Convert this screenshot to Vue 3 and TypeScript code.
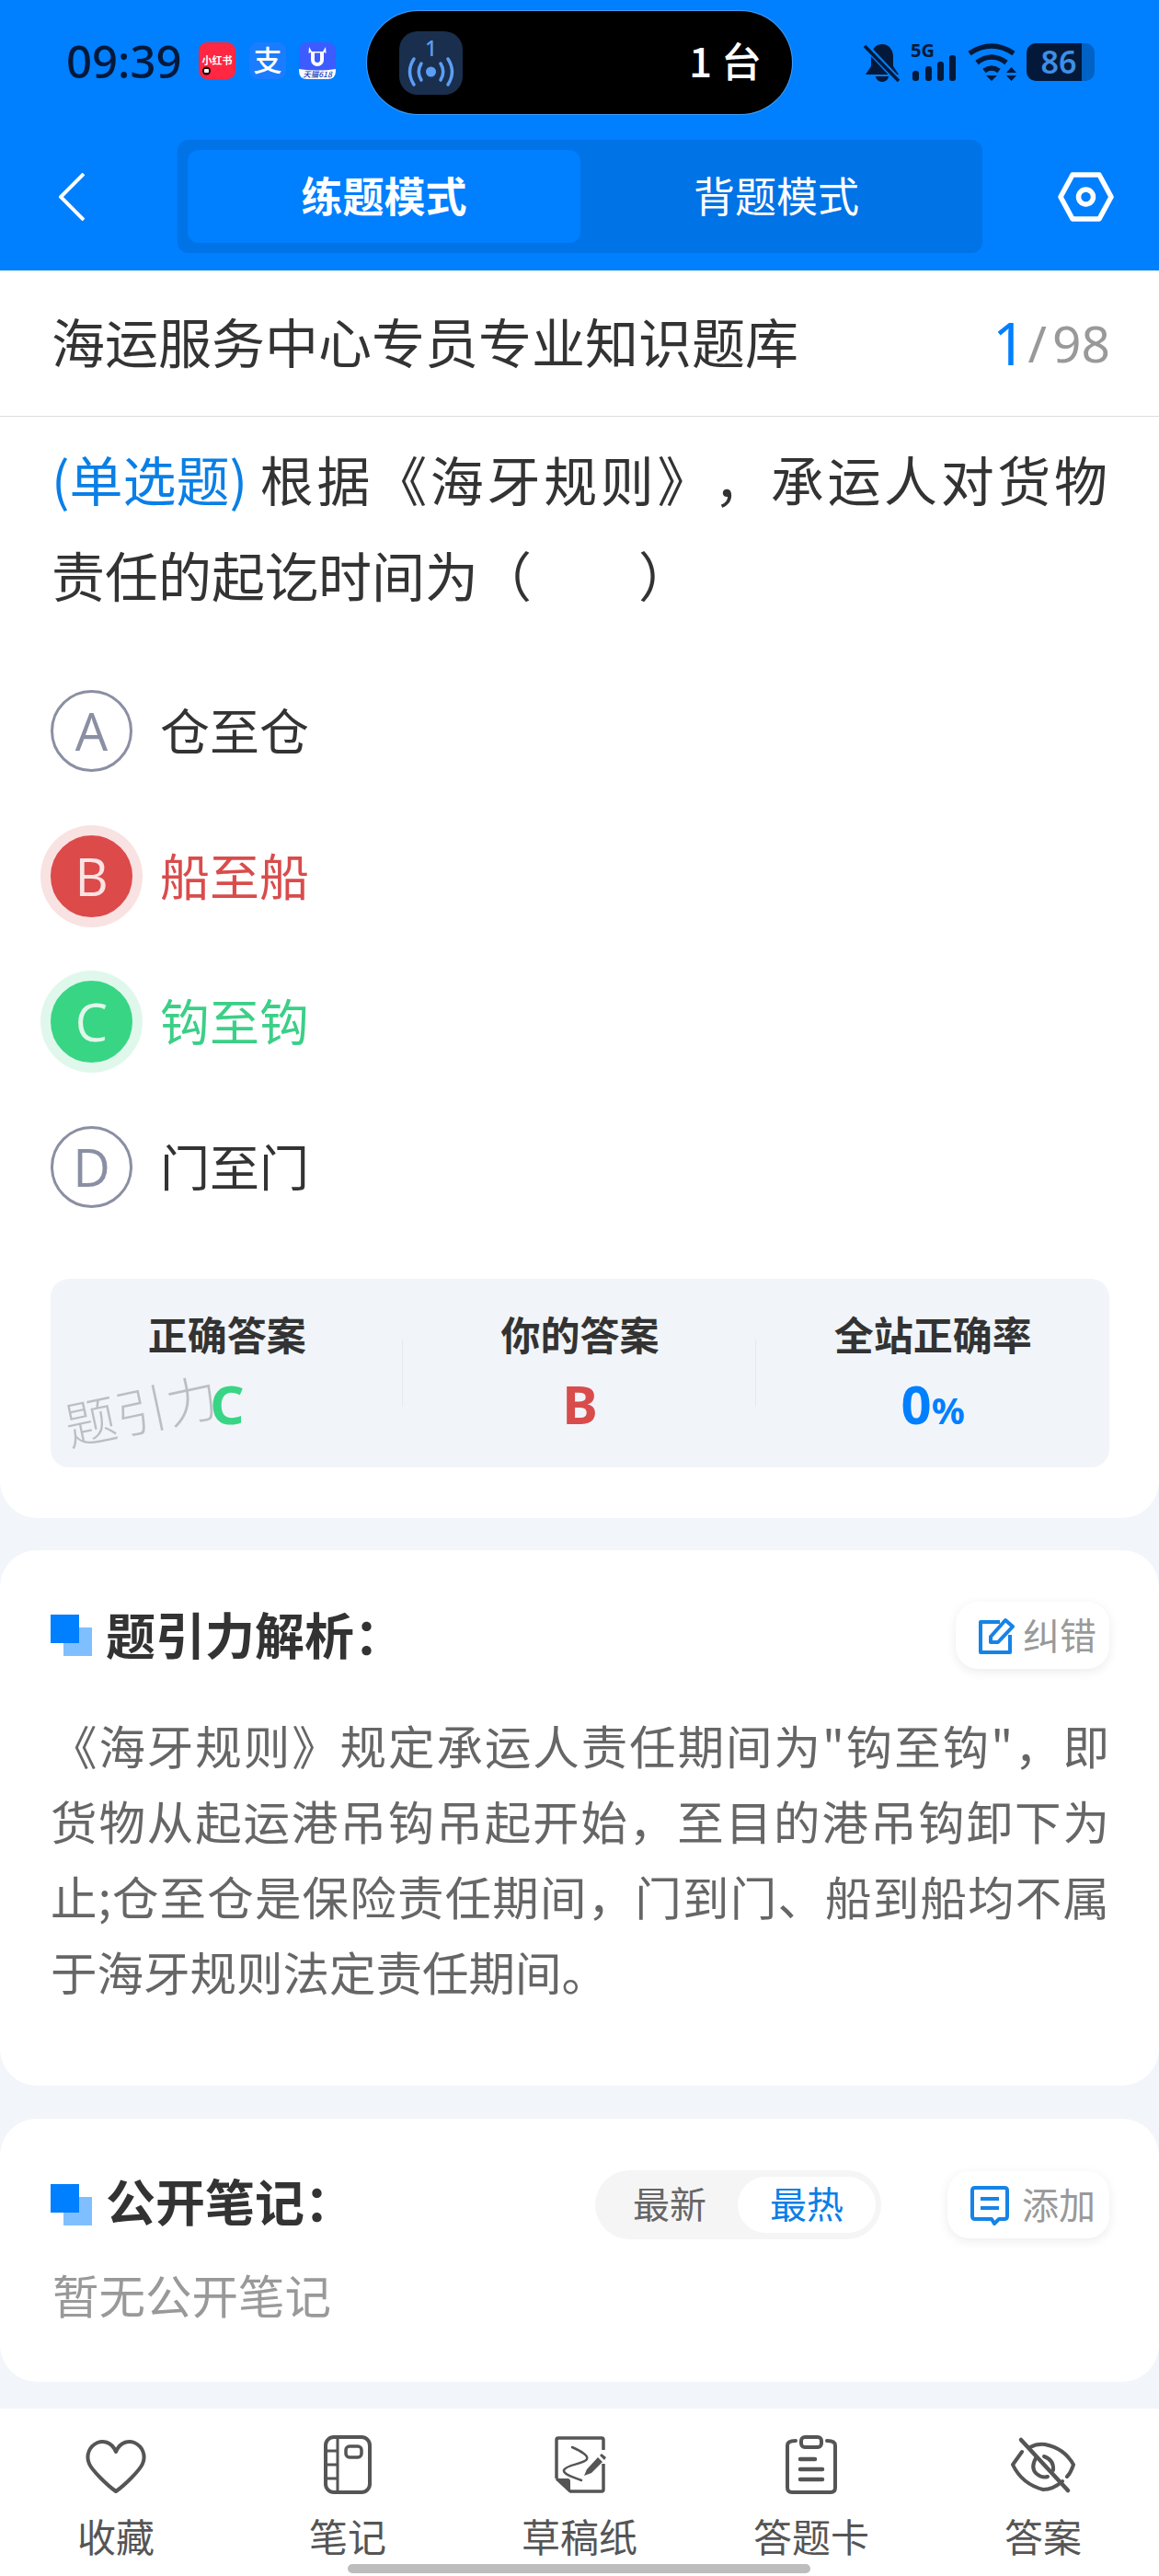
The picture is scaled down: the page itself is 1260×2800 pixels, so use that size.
<template>
  <div class="page">
    <!-- Top blue header -->
    <header class="header">
      <div class="status-bar">
        <div class="status-left">
          <span class="time">09:39</span>
          <svg class="app-icon" viewBox="0 0 40 40">
            <rect width="40" height="40" rx="9" fill="#ff2741" />
            <text x="20" y="24" text-anchor="middle" class="xhs-text">小红书</text>
            <circle cx="8.500" cy="31" r="4.500" fill="#1a0408" />
            <rect x="6" y="29" width="5" height="4" rx="1" fill="#fff" />
          </svg>
          <svg class="app-icon" viewBox="0 0 40 40">
            <rect width="40" height="40" rx="9" fill="#1a7dff" />
            <text x="20" y="31" text-anchor="middle" class="ali-text">支</text>
          </svg>
          <svg class="app-icon" viewBox="0 0 40 40">
            <rect width="40" height="40" rx="9" fill="#3d5cff" />
            <path d="M0 29 Q20 32 40 29 V31 Q40 40 31 40 H9 Q0 40 0 31 Z" fill="#fff" />
            <path d="M11 5 L14 10 H26 L29 5 L29.500 12 Q28 11 27 11 V19 A7 7 0 0 1 13 19 V11 Q12 11 10.500 12 Z M17 11.500 V19 A3 3 0 0 0 23 19 V11.500 Z" fill="#fff" fill-rule="evenodd" />
            <text x="20" y="37.500" text-anchor="middle" class="tmall-text">天猫618</text>
          </svg>
        </div>
        <div class="island">
          <svg class="island-icon" viewBox="0 0 69 69">
            <rect width="69" height="69" rx="20" fill="#1a2f4d" />
            <text x="34.500" y="27" text-anchor="middle" class="island-num">1</text>
            <circle cx="34.500" cy="44" r="5.500" fill="#5b9ef5" />
            <g fill="none" stroke="#5b9ef5" stroke-width="3.500" stroke-linecap="round">
              <path d="M24 35 Q18.500 44 24 53" />
              <path d="M45 35 Q50.500 44 45 53" />
              <path d="M16 30 Q7 44 16 58" />
              <path d="M53 30 Q62 44 53 58" />
            </g>
          </svg>
          <span class="island-text">1 台</span>
        </div>
        <div class="status-right">
          <svg class="bell" viewBox="0 0 40 42">
            <path d="M20 1 C28 1 32 8 32 15 V25 L38 34 H2 L8 25 V15 C8 8 12 1 20 1 Z" fill="#04193a" />
            <path d="M13 36 H27 A7 6 0 0 1 13 36 Z" fill="#04193a" />
            <path d="M2 3 L37 40" stroke="#007fff" stroke-width="7" />
            <path d="M1 3 L38 41" stroke="#04193a" stroke-width="3.500" />
          </svg>
          <svg class="signal" viewBox="0 0 50 42">
            <text x="0" y="15" class="fiveg">5G</text>
            <rect x="2" y="30" width="7" height="11" rx="3" fill="#04193a" />
            <rect x="16" y="25" width="7" height="16" rx="3" fill="#04193a" />
            <rect x="29" y="20" width="7" height="21" rx="3" fill="#04193a" />
            <rect x="42" y="13" width="7" height="28" rx="3" fill="#04193a" />
          </svg>
          <svg class="wifi" viewBox="0 0 54 42">
            <g fill="none" stroke="#04193a" stroke-width="5.500">
              <path d="M2 11 Q26 -5 50 11" />
              <path d="M10 21 Q26 9 42 21" />
              <path d="M18 30 Q26 24 34 30" />
            </g>
            <path d="M20 35 H32 L26 41 Z" fill="#04193a" />
            <path d="M42 32 L47.500 26 L53 32 Z M42 35 H53 L47.500 41 Z" fill="#04193a" />
          </svg>
          <div class="battery">
            <span class="battery-num">86</span>
            <span class="battery-rest"></span>
          </div>
        </div>
      </div>
      <div class="nav-bar">
        <svg class="back" viewBox="0 0 28 52">
          <path d="M27 1 L2 26 L27 51" fill="none" stroke="#fff" stroke-width="4" />
        </svg>
        <div class="mode-switch">
          <div class="mode mode-active">练题模式</div>
          <div class="mode">背题模式</div>
        </div>
        <svg class="hex" viewBox="0 0 61 54">
          <path d="M16 3 H45 L58 27 L45 51 H16 L3 27 Z" fill="none" stroke="#fff" stroke-width="5.500" stroke-linejoin="round" />
          <circle cx="30.500" cy="27" r="8" fill="none" stroke="#fff" stroke-width="5.500" />
        </svg>
      </div>
    </header>

    <!-- Question -->
    <section class="card question-card">
      <div class="title-row">
        <span class="bank-name">海运服务中心专员专业知识题库</span>
        <span class="progress"><b>1</b><i>/</i><span>98</span></span>
      </div>
      <div class="question">
        <div class="q-first"><span class="q-type">(单选题)</span><span>根据《海牙规则》，承运人对货物</span></div>
        <div>责任的起讫时间为（　　）</div>
      </div>
      <div class="options">
        <div v-for="opt in options" :key="opt.key" class="option" :class="opt.state">
          <span class="opt-circle">{{ opt.key }}</span>
          <span class="opt-text">{{ opt.text }}</span>
        </div>
      </div>
      <div class="answer-box">
        <div class="answer-col">
          <div class="answer-label">正确答案</div>
          <div class="answer-value green">C</div>
        </div>
        <div class="answer-col">
          <div class="answer-label">你的答案</div>
          <div class="answer-value red">B</div>
        </div>
        <div class="answer-col">
          <div class="answer-label">全站正确率</div>
          <div class="answer-value blue">0<small>%</small></div>
        </div>
        <span class="watermark">题引力</span>
      </div>
    </section>

    <!-- Analysis -->
    <section class="card analysis-card">
      <div class="block-head">
        <h3 class="block-title"><span class="squares"></span><span class="title-text">题引力解析：</span></h3>
        <div class="pill-btn">
          <svg viewBox="0 0 40 40" class="pill-icon">
            <path d="M24 5 H3 V38 H35 V19" fill="none" stroke="#1683e6" stroke-width="4" stroke-linejoin="round" />
            <path d="M14 21 L30 3 L38 10 L22 27 H14 Z" fill="none" stroke="#1683e6" stroke-width="4" stroke-linejoin="round" />
          </svg>
          <span class="pill-text">纠错</span>
        </div>
      </div>
      <p class="analysis-text">《海牙规则》规定承运人责任期间为"钩至钩"，即货物从起运港吊钩吊起开始，至目的港吊钩卸下为止;仓至仓是保险责任期间，门到门、船到船均不属于海牙规则法定责任期间。</p>
    </section>

    <!-- Notes -->
    <section class="card notes-card">
      <div class="block-head notes-head">
        <h3 class="block-title"><span class="squares"></span><span class="title-text notes-title">公开笔记：</span></h3>
        <div class="sort-toggle">
          <span class="sort-item">最新</span>
          <span class="sort-item sort-active">最热</span>
        </div>
        <div class="pill-btn add-btn">
          <svg viewBox="0 0 44 44" class="pill-icon add-icon">
            <path d="M6 3 H38 Q41 3 41 6 V34 Q41 37 38 37 H32 L27 42 L24 37 H6 Q3 37 3 34 V6 Q3 3 6 3 Z" fill="none" stroke="#1683e6" stroke-width="4" stroke-linejoin="round" />
            <path d="M12 15 H32 M12 25 H32" stroke="#1683e6" stroke-width="4" />
          </svg>
          <span class="pill-text">添加</span>
        </div>
      </div>
      <p class="empty-notes">暂无公开笔记</p>
    </section>

    <!-- Bottom toolbar -->
    <footer class="toolbar">
      <div class="tool">
        <svg class="tool-icon" viewBox="0 0 70 64">
          <path d="M35 18 C30 6 20 6 15 8 C6 12 2 22 6 31 C9 38 25 54 35 61 C45 54 61 38 64 31 C68 22 64 12 55 8 C50 6 40 6 35 18 Z" fill="none" stroke="#555" stroke-width="4" stroke-linejoin="round" />
        </svg>
        <span>收藏</span>
      </div>
      <div class="tool">
        <svg class="tool-icon" viewBox="0 0 70 64">
          <rect x="11" y="2" width="48" height="60" rx="9" fill="none" stroke="#555" stroke-width="4" />
          <path d="M24 2 V62 M11 17 H24 M11 32 H24 M11 47 H24" stroke="#555" stroke-width="3" />
          <rect x="33" y="12" width="17" height="12" rx="4" fill="none" stroke="#555" stroke-width="3.500" />
        </svg>
        <span>笔记</span>
      </div>
      <div class="tool">
        <svg class="tool-icon" viewBox="0 0 70 64">
          <path d="M10 47 V5 Q10 3 12 3 H59 Q61 3 61 5 V16 M61 31 V59 Q61 61 59 61 H25 L10 47" fill="none" stroke="#555" stroke-width="3.500" stroke-linejoin="round" />
          <path d="M10 47 H22 Q25 47 25 50 V61 Z" fill="#555" />
          <path d="M27 13 C36 17 45 22 43 26 C41 31 20 32 18 38 C17 43 30 46 37 49" fill="none" stroke="#555" stroke-width="2.500" stroke-linecap="round" />
          <path d="M40 44 L43 37 L55 24 L60 29 L48 41 Z" fill="#555" />
          <path d="M57 22 L59 20 L64 24 L62 27 Z" fill="#555" />
        </svg>
        <span>草稿纸</span>
      </div>
      <div class="tool">
        <svg class="tool-icon" viewBox="0 0 70 64">
          <path d="M18 6 Q9 6 9 11 V57 Q9 62 14 62 H56 Q61 62 61 57 V11 Q61 6 52 6" fill="none" stroke="#555" stroke-width="4" stroke-linecap="round" />
          <rect x="24" y="2" width="22" height="11" rx="4" fill="none" stroke="#555" stroke-width="4" />
          <path d="M23 26 H39 M23 37 H47 M23 48 H47" stroke="#555" stroke-width="4.500" stroke-linecap="round" />
        </svg>
        <span>答题卡</span>
      </div>
      <div class="tool">
        <svg class="tool-icon" viewBox="0 0 70 64">
          <path d="M12 18 L2 32 Q12 53 35 59 Q46 59 56 50 M21 13 Q28 9 37 10 Q58 14 68 32 Q65 41 61 45" fill="none" stroke="#555" stroke-width="4" stroke-linecap="round" stroke-linejoin="round" />
          <path d="M27 25 Q21 36 28 42 Q34 47 40 45 M36 23 Q47 27 46 38" fill="none" stroke="#555" stroke-width="4" stroke-linecap="round" />
          <path d="M11 5 L62 60" stroke="#555" stroke-width="4.500" stroke-linecap="round" />
        </svg>
        <span>答案</span>
      </div>
      <div class="home-bar"></div>
    </footer>
  </div>
</template>

<script setup lang="ts">
interface Option {
  key: string
  text: string
  state: string
}

const options: Option[] = [
  { key: 'A', text: '仓至仓', state: '' },
  { key: 'B', text: '船至船', state: 'wrong' },
  { key: 'C', text: '钩至钩', state: 'right' },
  { key: 'D', text: '门至门', state: '' },
]
</script>

<style>
html,
body {
  margin: 0;
}
</style>

<style scoped>
.page {
  width: 1260px;
  height: 2800px;
  overflow: hidden;
  display: flex;
  flex-direction: column;
  background: #f2f5f9;
  font-family: "Noto Sans CJK SC", "Noto Sans", sans-serif;
  text-spacing-trim: space-all;
  color: #333;
}

/* Header */
.header {
  height: 294px;
  flex: none;
  background: #007fff;
}

.status-bar {
  display: grid;
  grid-template-columns: 399px 462px 1fr;
  height: 112px;
  padding-top: 12px;
  margin-bottom: 28px;
}

.status-left {
  display: flex;
  align-items: center;
  padding-left: 72px;
  padding-bottom: 4px;
}

.time {
  width: 144px;
  font-family: "Noto Sans", sans-serif;
  font-size: 49px;
  line-height: 54px;
  font-weight: 500;
  color: #04193a;
}

.app-icon {
  width: 40px;
  height: 40px;
  margin-right: 14.500px;
  flex: none;
  overflow: visible;
}

.xhs-text {
  font-size: 11px;
  font-weight: 700;
  fill: #fff;
}

.ali-text {
  font-size: 31px;
  font-weight: 500;
  fill: #fff;
}

.tmall-text {
  font-size: 8.500px;
  font-weight: 500;
  font-style: italic;
  fill: #1f3dba;
}

.island {
  display: flex;
  align-items: center;
  justify-content: space-between;
  background: #000;
  border-radius: 56px;
  box-shadow: 0 0 0 1px rgba(255, 255, 255, 0.25);
  padding: 0 33px 0 35px;
}

.island-icon {
  width: 69px;
  height: 69px;
}

.island-num {
  font-family: "Noto Sans", sans-serif;
  font-size: 23px;
  font-weight: 500;
  fill: #5b9ef5;
}

.island-text {
  font-size: 44px;
  line-height: 50px;
  font-weight: 500;
  color: #fff;
  padding-bottom: 6px;
}

.status-right {
  display: flex;
  align-items: flex-start;
  padding: 35px 0 0 78px;
}

.bell {
  width: 40px;
  height: 42px;
  margin-right: 11px;
}

.signal {
  width: 50px;
  height: 42px;
  margin-right: 12px;
  overflow: visible;
}

.fiveg {
  font-family: "Noto Sans", sans-serif;
  font-size: 20px;
  font-weight: 700;
  fill: #04193a;
}

.wifi {
  width: 54px;
  height: 42px;
  margin-right: 10px;
}

.battery {
  display: flex;
  align-items: center;
  height: 41px;
  width: 60px;
  background: #04193a;
  border-radius: 10px 0 0 10px;
  position: relative;
}

.battery-num {
  font-family: "Noto Sans", sans-serif;
  width: 100%;
  text-align: center;
  font-size: 34px;
  font-weight: 600;
  line-height: 41px;
  padding-left: 10px;
  color: #3d8fe6;
}

.battery-rest {
  position: absolute;
  left: 60px;
  top: 0;
  width: 14px;
  height: 41px;
  background: #0062c4;
  border-radius: 0 10px 10px 0;
}

.nav-bar {
  display: grid;
  grid-template-columns: 193px 875px 1fr;
  align-items: center;
  height: 123px;
}

.back {
  width: 28px;
  height: 52px;
  margin-left: 64px;
}

.mode-switch {
  display: grid;
  grid-template-columns: 427px 1fr;
  height: 123px;
  box-sizing: border-box;
  padding: 11px;
  background: #0073e6;
  border-radius: 12px;
}

.mode {
  display: flex;
  align-items: center;
  justify-content: center;
  font-size: 45px;
  padding-bottom: 4px;
  color: #fff;
}

.mode-active {
  background: #007fff;
  border-radius: 12px;
  font-weight: 700;
}

.hex {
  width: 61px;
  height: 54px;
  margin-left: 82px;
}

/* Cards */
.card {
  background: #fff;
  border-radius: 40px;
}

.question-card {
  border-radius: 0 0 40px 40px;
  padding-bottom: 55px;
}

.title-row {
  display: flex;
  align-items: center;
  justify-content: space-between;
  height: 158px;
  padding: 0 53px 0 56px;
  border-bottom: 1px solid #ddd;
}

.bank-name {
  font-size: 58px;
  padding-bottom: 6px;
  color: #333;
}

.progress {
  display: flex;
  align-items: center;
  font-family: "Noto Sans", sans-serif;
  font-size: 55px;
  line-height: 70px;
  color: #999;
}

.progress b {
  font-weight: 400;
  font-size: 64px;
  color: #007fff;
}

.progress i {
  font-style: normal;
  margin: 0 6px 0 2px;
}

.question {
  padding: 15px 56px 0 56px;
  font-size: 58px;
  line-height: 104px;
}

.q-first {
  text-align: justify;
  text-align-last: justify;
}

.q-type {
  display: inline-block;
  color: #0a7fe6;
  text-align-last: left;
  margin-right: 10px;
}

.options {
  margin-top: 39px;
  padding-left: 55px;
}

.option {
  display: flex;
  align-items: center;
  height: 158px;
  color: #333;
}

.opt-circle {
  box-sizing: border-box;
  width: 89px;
  height: 89px;
  display: flex;
  align-items: center;
  justify-content: center;
  border: 3px solid #8a8fa3;
  border-radius: 50%;
  font-family: "Open Sans", sans-serif;
  font-size: 56px;
  color: #8a8fa3;
  margin-right: 30px;
}

.opt-text {
  font-size: 54px;
  padding-bottom: 4px;
}

.wrong {
  color: #d94c4c;
}

.wrong .opt-circle {
  background: #dc4a4a;
  border-color: #dc4a4a;
  color: #fbe3e3;
  box-shadow: 0 0 0 11px #f9e2e2;
}

.right {
  color: #3bcf87;
}

.right .opt-circle {
  background: #38d585;
  border-color: #38d585;
  color: #dff8ea;
  box-shadow: 0 0 0 11px #e0f8ec;
}

.answer-box {
  position: relative;
  display: grid;
  grid-template-columns: repeat(3, 1fr);
  height: 205px;
  margin: 43px 54px 0 55px;
  padding-top: 29px;
  box-sizing: border-box;
  background: #f1f5f9;
  border-radius: 20px;
  text-align: center;
}

.answer-col {
  position: relative;
}

.answer-col:not(:last-of-type)::after {
  content: "";
  position: absolute;
  left: 382px;
  top: 37px;
  width: 1px;
  height: 73px;
  background: #e6eaee;
}

.answer-label {
  font-size: 43px;
  line-height: 60px;
  font-weight: 700;
}

.answer-value {
  margin-top: 12px;
  font-family: "Noto Sans", sans-serif;
  font-size: 58px;
  line-height: 70px;
  font-weight: 700;
}

.answer-value small {
  font-size: 40px;
}

.green {
  color: #38d585;
}

.red {
  color: #d94c4c;
}

.blue {
  color: #007fff;
}

.watermark {
  position: absolute;
  left: 14px;
  top: 106px;
  font-size: 56px;
  line-height: 70px;
  font-weight: 300;
  color: rgba(0, 0, 0, 0.22);
  transform: rotate(-12deg);
}

.analysis-card {
  margin-top: 35px;
  padding: 56px 54px 84px 55px;
}

.block-head {
  display: flex;
  align-items: center;
  justify-content: space-between;
}

.block-title {
  margin: 0;
  display: flex;
  align-items: center;
  height: 73px;
  font-size: 54px;
  line-height: 73px;
  font-weight: 700;
  color: #333;
}

.title-text {
  margin-bottom: 4px;
}

.notes-title {
  margin-bottom: 10px;
}

.squares {
  width: 45px;
  height: 45px;
  margin-right: 15px;
  background: linear-gradient(#007fff, #007fff) 0 0 / 31px 31px no-repeat, linear-gradient(#80bfff, #80bfff) 14px 14px / 31px 31px no-repeat;
}

.pill-btn {
  display: flex;
  align-items: center;
  box-sizing: border-box;
  height: 73px;
  width: 167px;
  padding-left: 24px;
  border-radius: 24px;
  background: #fff;
  box-shadow: 0 3px 12px rgba(0, 0, 0, 0.08);
  font-size: 40px;
  color: #999;
}

.pill-text {
  padding-bottom: 4px;
}

.pill-icon {
  width: 40px;
  height: 40px;
  margin-right: 9px;
}

.analysis-text {
  margin: 41px 0 0;
  font-size: 50.500px;
  line-height: 82px;
  color: #666;
  text-align: justify;
}

.notes-card {
  margin-top: 36px;
  padding: 56px 54px 66px 55px;
}

.notes-head {
  height: 75px;
}

.sort-toggle {
  display: flex;
  align-items: center;
  margin-left: auto;
  box-sizing: border-box;
  width: 311px;
  height: 75px;
  padding: 0 6px 0 41px;
  justify-content: space-between;
  border-radius: 38px;
  background: #f5f5f5;
  font-size: 40px;
  color: #666;
}

.sort-item {
  padding-bottom: 6px;
}

.sort-active {
  display: flex;
  align-items: center;
  justify-content: center;
  box-sizing: border-box;
  width: 150px;
  height: 61px;
  border-radius: 31px;
  background: #fff;
  color: #0a7fe6;
}

.add-btn {
  width: 176px;
  margin-left: 72px;
}

.add-icon {
  width: 44px;
  height: 44px;
  margin-right: 13px;
}

.empty-notes {
  margin: 29px 0 0 2px;
  font-size: 50.500px;
  line-height: 60px;
  color: #999;
}

/* Toolbar */
.toolbar {
  position: relative;
  flex: 1;
  margin-top: 29px;
  display: grid;
  grid-template-columns: repeat(5, 1fr);
  background: #fff;
  padding-top: 29px;
}

.tool {
  display: flex;
  flex-direction: column;
  align-items: center;
  font-size: 42px;
  line-height: 50px;
  color: #555;
}

.tool-icon {
  width: 70px;
  height: 64px;
  margin-bottom: 20px;
}

.home-bar {
  position: absolute;
  left: 378px;
  bottom: 3px;
  width: 503px;
  height: 10px;
  border-radius: 5px;
  background: #bdbdbd;
}
</style>
